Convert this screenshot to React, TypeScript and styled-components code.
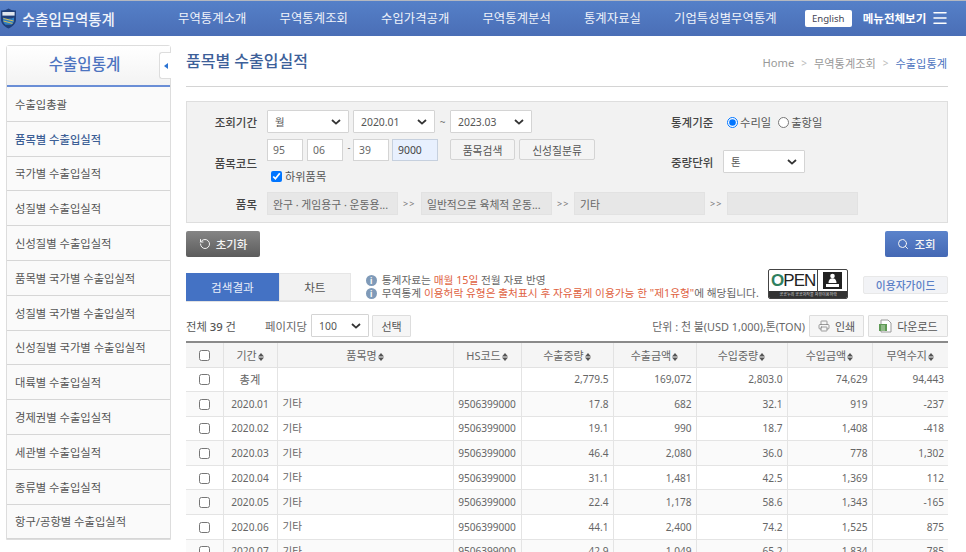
import React from 'react';
import styled, { createGlobalStyle } from 'styled-components';
import { Printer, RotateCw, Search, Menu } from 'lucide-react';

const GlobalStyle = createGlobalStyle`
   html, body {
      margin: 0;
      padding: 0;
      height: 552px;
      overflow: hidden;
      background: #fff;
   }
   * {
      box-sizing: border-box;
   }
   body, input, select, button, table {
      font-family: "Noto Sans", "Noto Sans CJK KR", sans-serif;
      font-size: 11px;
      color: #555;
   }
`;

const chevron = `url("data:image/svg+xml,%3Csvg xmlns='http://www.w3.org/2000/svg' width='10' height='6'%3E%3Cpath d='M1 1l4 3.6L9 1' fill='none' stroke='%23333' stroke-width='1.8'/%3E%3C/svg%3E")`;

const NAV = ['무역통계소개', '무역통계조회', '수입가격공개', '무역통계분석', '통계자료실', '기업특성별무역통계'];
const SIDE = [
   '수출입총괄',
   '품목별 수출입실적',
   '국가별 수출입실적',
   '성질별 수출입실적',
   '신성질별 수출입실적',
   '품목별 국가별 수출입실적',
   '성질별 국가별 수출입실적',
   '신성질별 국가별 수출입실적',
   '대륙별 수출입실적',
   '경제권별 수출입실적',
   '세관별 수출입실적',
   '종류별 수출입실적',
   '항구/공항별 수출입실적',
];
const COLS = [37, 54, 176, 68, 92, 83, 91, 85, 76];
const HEADS = ['기간', '품목명', 'HS코드', '수출중량', '수출금액', '수입중량', '수입금액', '무역수지'];
const ROWS = [
   ['2020.01', '17.8', '682', '32.1', '919', '-237'],
   ['2020.02', '19.1', '990', '18.7', '1,408', '-418'],
   ['2020.03', '46.4', '2,080', '36.0', '778', '1,302'],
   ['2020.04', '31.1', '1,481', '42.5', '1,369', '112'],
   ['2020.05', '22.4', '1,178', '58.6', '1,343', '-165'],
   ['2020.06', '44.1', '2,400', '74.2', '1,525', '875'],
   ['2020.07', '42.9', '1,049', '65.2', '1,834', '785'],
];

const Header = styled.header`
   height: 36px;
   display: flex;
   align-items: center;
   border-top: 1px solid #b4b8c0;
   background: linear-gradient(#5580c8, #4a6eb6);
   color: #fff;
   padding-bottom: 1px;
`;

const Brand = styled.div`
   width: 178px;
   display: flex;
   align-items: center;
   gap: 5px;
   font-size: 14.4px;
   font-weight: 500;
   color: #f2f5fb;
`;

const Nav = styled.nav`
   display: flex;
   gap: 33px;
   font-size: 12.3px;
   letter-spacing: 0.1px;
   color: #f0f3fa;
   white-space: nowrap;
`;

const HeaderRight = styled.div`
   margin-left: 28px;
   display: flex;
   align-items: center;
`;

const EnglishButton = styled.button`
   width: 47px;
   height: 17px;
   padding: 0;
   border: 0;
   border-radius: 2px;
   background: #fff;
   color: #445;
   font-size: 9.6px;
`;

const AllMenu = styled.span`
   margin: 0 5px 0 11px;
   font-size: 11.5px;
   font-weight: 700;
   color: #fff;
`;

const Body = styled.div`
   display: flex;
   padding: 9px 18px 0 6px;
   gap: 15px;
`;

const Sidebar = styled.aside`
   width: 165px;
   flex: none;
   border: 1px solid #ddd;
   border-radius: 3px 3px 0 0;
   background: #fff;
   align-self: flex-start;
`;

const SideTitle = styled.h2`
   position: relative;
   height: 41px;
   margin: 0;
   display: flex;
   align-items: center;
   justify-content: center;
   padding: 0 8px 5px 0;
   border-bottom: 2px solid #6a8ed6;
   background: linear-gradient(#fff, #f3f3f3);
   font-size: 15.6px;
   font-weight: 500;
   color: #4d74c0;
`;

const CollapseTab = styled.span`
   position: absolute;
   top: 6px;
   right: -1px;
   width: 12px;
   height: 27px;
   display: flex;
   align-items: center;
   justify-content: center;
   background: #fff;
   border: 1px solid #ddd;
   border-right: 0;
   border-radius: 3px 0 0 3px;

   &::before {
      content: '';
      border: 3px solid transparent;
      border-right: 4px solid #2b73d2;
      border-left: 0;
   }
`;

const SideItem = styled.div<{ $active?: boolean }>`
   height: 34.8px;
   display: flex;
   align-items: center;
   padding-left: 8px;
   border-bottom: 1px solid #d6d6d6;
   background: #fafafa;
   font-size: 11.3px;
   white-space: nowrap;
   color: ${(p) => (p.$active ? '#3d5f96' : '#555')};
   font-weight: ${(p) => (p.$active ? 500 : 400)};
`;

const Main = styled.main`
   flex: 1;
   min-width: 0;
`;

const TitleRow = styled.div`
   height: 42px;
   display: flex;
   align-items: center;
   justify-content: space-between;
   border-bottom: 1px solid #d4d4d4;
   padding-bottom: 9px;
`;

const PageTitle = styled.h1`
   margin: -2px 0 0;
   font-size: 16px;
   font-weight: 500;
   color: #3d6099;
`;

const Crumbs = styled.div`
   display: flex;
   align-items: center;
   gap: 7px;
   margin-right: 1px;
   padding-top: 3px;
   font-size: 11.2px;
   color: #999;
`;

const CrumbSep = styled.span`
   color: #bbb;
   font-size: 10px;
`;

const CrumbCurrent = styled.span`
   color: #4d74c0;
`;

const SearchPanel = styled.section`
   margin-top: 14px;
   height: 122px;
   background: #f2f2f2;
   border: 1px solid #dedede;
   padding: 8px 0 0;
`;

const PanelTop = styled.div`
   display: flex;
`;

const LeftForm = styled.div`
   width: 484px;
   display: grid;
   grid-template-columns: 70px 1fr;
   column-gap: 10px;
   row-gap: 6px;
   align-items: center;
`;

const RightForm = styled.div`
   display: grid;
   grid-template-columns: 42px auto;
   grid-template-rows: 23px 23px;
   column-gap: 10px;
   row-gap: 17px;
   align-items: center;
`;

const FieldLabel = styled.label`
   font-size: 11.5px;
   font-weight: 500;
   color: #444;
   text-align: right;
   white-space: nowrap;
`;

const Row = styled.div`
   display: flex;
   align-items: center;
`;

const Stack = styled.div`
   display: flex;
   flex-direction: column;
`;

const Select = styled.select<{ $w: number; $ml?: number }>`
   appearance: none;
   width: ${(p) => p.$w}px;
   height: 23px;
   margin-left: ${(p) => p.$ml ?? 0}px;
   padding: 0 0 0 7px;
   border: 1px solid #d4d4d4;
   border-radius: 1px;
   font-size: 10.4px;
   color: #555;
   background: #fff ${chevron} no-repeat right 7px center;
`;

const Tilde = styled.span`
   width: 15px;
   text-align: center;
   font-size: 10px;
   color: #777;
`;

const CodeInput = styled.input<{ $w: number; $filled?: boolean; $mr?: number }>`
   width: ${(p) => p.$w}px;
   height: 22px;
   padding: 0 0 0 5px;
   border: 1px solid ${(p) => (p.$filled ? '#c6d0de' : '#d4d4d4')};
   background: ${(p) => (p.$filled ? '#e8f0fe' : '#fff')};
   font-size: 10.4px;
   color: ${(p) => (p.$filled ? '#444' : '#666')};
   margin-right: ${(p) => p.$mr ?? 4}px;
`;

const Dash = styled.span`
   width: 4px;
   margin-right: 2px;
   margin-top: -6px;
   font-size: 9px;
   text-align: center;
`;

const FormButton = styled.button<{ $w: number; $ml?: number }>`
   width: ${(p) => p.$w}px;
   height: 21px;
   margin-left: ${(p) => p.$ml ?? 0}px;
   margin-top: -1px;
   padding: 0;
   border: 1px solid #d4d4d4;
   border-radius: 2px;
   background: #f4f4f4;
   font-size: 10.8px;
   color: #555;
`;

const CheckLabel = styled.label`
   height: 21px;
   margin-top: 4px;
   display: flex;
   align-items: center;
   gap: 3px;
   font-size: 11.2px;
   color: #555;

   input {
      width: 11px;
      height: 11px;
      margin: 1px 0 0 4px;
   }
`;

const RadioLabel = styled.label`
   display: flex;
   align-items: center;
   gap: 2px;
   margin-right: 3px;
   font-size: 11.3px;
   color: #555;

   input {
      width: 11px;
      height: 11px;
      margin: 1px 0 0 4px;
   }
`;

const ItemRow = styled.div`
   margin-top: 6px;
   display: grid;
   grid-template-columns: 70px 1fr;
   column-gap: 10px;
   align-items: center;
`;

const ItemBox = styled.div`
   width: 131px;
   height: 23px;
   display: flex;
   align-items: center;
   padding-left: 5px;
   background: #e7e7e7;
   border: 1px solid #e2e2e2;
   font-size: 10.8px;
   color: #666;
   white-space: nowrap;
   overflow: hidden;
`;

const Arrow = styled.span<{ $w: number }>`
   width: ${(p) => p.$w}px;
   padding-left: 5px;
   font-size: 9px;
   letter-spacing: 1px;
   color: #777;
`;

const ActionRow = styled.div`
   margin-top: 8px;
   display: flex;
   justify-content: space-between;
`;

const ActionButton = styled.button<{ $primary?: boolean; $w: number }>`
   width: ${(p) => p.$w}px;
   height: 26px;
   display: flex;
   align-items: center;
   justify-content: center;
   gap: 5px;
   padding: 0;
   border: 0;
   border-radius: 2px;
   font-size: 11.5px;
   font-weight: 500;
   color: #f4f4f4;
   background: ${(p) =>
      p.$primary ? 'linear-gradient(#5b83cb, #4468b4)' : 'linear-gradient(#858585, #5c5c5c)'};
`;

const TabRow = styled.div`
   margin-top: 16px;
   height: 29px;
   display: flex;
   align-items: flex-start;
   border-bottom: 1px solid #e2e2e2;
`;

const Tab = styled.div<{ $active?: boolean; $w: number }>`
   width: ${(p) => p.$w}px;
   height: 28px;
   display: flex;
   align-items: center;
   justify-content: center;
   font-size: 11.6px;
   color: ${(p) => (p.$active ? '#e8eefa' : '#555')};
   background: ${(p) => (p.$active ? '#4472c4' : '#f2f2f2')};
   border: ${(p) => (p.$active ? '0' : '1px solid #e6e6e6')};
`;

const Notes = styled.div`
   margin: 1px 0 0 15px;
   width: 403px;
   display: flex;
   flex-direction: column;
   font-size: 10.7px;
   line-height: 13px;
   color: #666;
   white-space: nowrap;
`;

const NoteLine = styled.div`
   display: flex;
   align-items: center;
   gap: 5px;
`;

const Red = styled.span`
   color: #e0623f;
`;

const InfoDot = styled.span`
   width: 11px;
   height: 11px;
   flex: none;
   display: inline-flex;
   align-items: center;
   justify-content: center;
   border-radius: 50%;
   background: #7f9ab8;
   color: #fff;
   font-size: 8px;
   font-weight: 700;
   line-height: 1;
`;

const OpenBadge = styled.div`
   width: 80px;
   height: 30px;
   margin-top: -4px;
   display: flex;
   flex-direction: column;
   border: 1px solid #444;
   border-radius: 2px;
   background: #fff;
   overflow: hidden;
`;

const OpenTop = styled.div`
   flex: 1;
   display: flex;
   align-items: stretch;
   min-height: 0;
`;

const OpenWord = styled.div`
   flex: 1;
   display: flex;
   align-items: center;
   justify-content: center;
   font-family: "Liberation Sans", sans-serif;
   font-size: 17px;
   line-height: 1;
   letter-spacing: -1px;
   color: #222;
   border-right: 1px solid #444;
`;

const OpenO = styled.span`
   color: #2f7f5f;
   font-weight: 700;
`;

const OpenMark = styled.div`
   width: 29px;
   display: flex;
   align-items: center;
   justify-content: center;
`;

const OpenCaption = styled.div`
   height: 7px;
   flex: none;
   background: #333;
   color: #ddd;
   font-size: 4px;
   line-height: 7px;
   text-align: center;
   white-space: nowrap;
   overflow: hidden;
`;

const GuideButton = styled.button`
   width: 85px;
   height: 18px;
   margin: 3px 0 0 15px;
   padding: 0;
   border: 1px solid #e8e8e8;
   border-radius: 2px;
   background: #f2f3f6;
   color: #5b80c6;
   font-size: 10.8px;
   font-weight: 500;
`;

const Toolbar = styled.div`
   margin-top: 12px;
   height: 23px;
   display: flex;
   align-items: center;
`;

const Total = styled.span`
   width: 79px;
   font-size: 11.3px;
   color: #555;
`;

const TotalCount = styled.b`
   font-weight: 500;
`;

const PerPage = styled.span`
   width: 46px;
   font-size: 11.4px;
   color: #666;
   white-space: nowrap;
`;

const SmallButton = styled.button<{ $w: number; $ml: number }>`
   width: ${(p) => p.$w}px;
   height: 22px;
   margin-left: ${(p) => p.$ml}px;
   display: flex;
   align-items: center;
   justify-content: center;
   gap: 5px;
   padding: 0;
   border: 1px solid #ddd;
   border-radius: 1px;
   background: #f6f6f6;
   font-size: 11px;
   color: #555;
`;

const Unit = styled.span`
   margin-left: auto;
   font-size: 10.9px;
   color: #666;
   white-space: nowrap;
`;

const Table = styled.table`
   margin-top: 4px;
   width: 762px;
   table-layout: fixed;
   border-collapse: collapse;
   border-top: 2px solid #8a8a8a;
`;

const Th = styled.th`
   height: 25px;
   padding: 0;
   background: #f5f5f5;
   border: 1px solid #e2e2e2;
   border-top: 0;
   font-size: 11px;
   font-weight: 400;
   color: #666;
   white-space: nowrap;
   &:first-child { border-left: 0; }
   &:last-child { border-right: 0; }
`;

const Tr = styled.tr<{ $shade?: boolean }>`
   height: 24.6px;
   background: ${(p) => (p.$shade ? '#fafafa' : '#fff')};
`;

const Td = styled.td<{ $align?: string; $strong?: boolean }>`
   padding: 0 4px;
   border: 1px solid #e4e4e4;
   text-align: ${(p) => p.$align ?? 'right'};
   font-size: ${(p) => (p.$strong ? '11.3px' : '10.1px')};
   color: #666;
   white-space: nowrap;
   overflow: hidden;
   &:first-child { border-left: 0; }
   &:last-child { border-right: 0; }
`;

const NameCell = styled(Td)`
   padding-left: 5px;
   padding-bottom: 2px;
   font-size: 10.6px;
`;

const TableCheck = styled.input`
   display: block;
   width: 11px;
   height: 11px;
   margin: 1px auto 0;
   accent-color: #555;
`;

const SortSvg = styled.svg`
   margin-left: 1px;
   vertical-align: -1px;
`;

const ResetIcon = styled(RotateCw)`
   transform: scaleX(-1);
`;

const SortMark = () => (
   <SortSvg width="6" height="8" viewBox="0 0 6 8">
      <path d="M3 0l3 3.4H0zM3 8L0 4.6h6z" fill="#555" />
   </SortSvg>
);

const Shield = () => (
   <svg width="17" height="21" viewBox="0 0 17 21">
      <path d="M1 2.4C4 2.6 6.400 2 8.500 .6c2.100 1.400 4.500 2 7.500 1.800v9c0 4-3 6.800-7.500 9C4 18.200 1 15.400 1 11.400z" fill="#1f3f7a" />
      <path d="M2.400 4h12.200v3.600H2.400z" fill="#dfe6ee" />
      <path d="M3 9.500c3 1.600 8 1.600 11 0v2.500c0 2-1 3.600-2.500 4.800H5.500C4 15.600 3 14 3 12z" fill="#2f7fc4" />
      <path d="M3.500 10.500l10 2.500M3.500 13l9 2.400" stroke="#e8c34a" strokeWidth=".9" />
   </svg>
);

const ExcelIcon = () => (
   <svg width="14" height="14" viewBox="0 0 14 14">
      <path d="M3 1h7l3 3v9H3z" fill="#fff" stroke="#9a9a9a" />
      <path d="M1 5h8v7H1z" fill="#5f9a55" />
      <path d="M3 7h4M3 9h4M3 11h4" stroke="#dcecd8" strokeWidth=".8" />
   </svg>
);

const OpenFigure = () => (
   <svg width="19" height="17" viewBox="0 0 19 17">
      <rect width="19" height="17" fill="#222" />
      <circle cx="9.500" cy="4" r="2.300" fill="#fff" />
      <path d="M5.500 11c0-3 1.500-4.700 4-4.700s4 1.700 4 4.700z" fill="#fff" />
      <rect x="3" y="12" width="13" height="3" fill="#fff" />
   </svg>
);

const App = () => {
   return (
      <>
         <GlobalStyle />
         <Header>
            <Brand>
               <Shield />
               수출입무역통계
            </Brand>
            <Nav>
               {NAV.map((n) => (
                  <span key={n}>{n}</span>
               ))}
            </Nav>
            <HeaderRight>
               <EnglishButton>English</EnglishButton>
               <AllMenu>메뉴전체보기</AllMenu>
               <Menu size={18} strokeWidth={2} color="#fff" />
            </HeaderRight>
         </Header>
         <Body>
            <Sidebar>
               <SideTitle>
                  수출입통계
                  <CollapseTab />
               </SideTitle>
               {SIDE.map((s, i) => (
                  <SideItem key={s} $active={i === 1}>
                     {s}
                  </SideItem>
               ))}
            </Sidebar>
            <Main>
               <TitleRow>
                  <PageTitle>품목별 수출입실적</PageTitle>
                  <Crumbs>
                     <span>Home</span>
                     <CrumbSep>&gt;</CrumbSep>
                     <span>무역통계조회</span>
                     <CrumbSep>&gt;</CrumbSep>
                     <CrumbCurrent>수출입통계</CrumbCurrent>
                  </Crumbs>
               </TitleRow>

               <SearchPanel>
                  <PanelTop>
                     <LeftForm>
                        <FieldLabel>조회기간</FieldLabel>
                        <Row>
                           <Select $w={82} defaultValue="월">
                              <option>월</option>
                           </Select>
                           <Select $w={82} $ml={4} defaultValue="2020.01">
                              <option>2020.01</option>
                           </Select>
                           <Tilde>~</Tilde>
                           <Select $w={82} defaultValue="2023.03">
                              <option>2023.03</option>
                           </Select>
                        </Row>
                        <FieldLabel>품목코드</FieldLabel>
                        <Stack>
                           <Row>
                              <CodeInput $w={36} defaultValue="95" />
                              <CodeInput $w={36} defaultValue="06" />
                              <Dash>-</Dash>
                              <CodeInput $w={36} $mr={3} defaultValue="39" />
                              <CodeInput $w={46} $filled defaultValue="9000" />
                              <FormButton $w={65} $ml={8}>품목검색</FormButton>
                              <FormButton $w={76} $ml={4}>신성질분류</FormButton>
                           </Row>
                           <CheckLabel>
                              <input type="checkbox" defaultChecked />
                              하위품목
                           </CheckLabel>
                        </Stack>
                     </LeftForm>
                     <RightForm>
                        <FieldLabel>통계기준</FieldLabel>
                        <Row>
                           <RadioLabel>
                              <input type="radio" name="basis" defaultChecked />
                              수리일
                           </RadioLabel>
                           <RadioLabel>
                              <input type="radio" name="basis" />
                              출항일
                           </RadioLabel>
                        </Row>
                        <FieldLabel>중량단위</FieldLabel>
                        <Select $w={82} defaultValue="톤">
                           <option>톤</option>
                        </Select>
                     </RightForm>
                  </PanelTop>
                  <ItemRow>
                     <FieldLabel>품목</FieldLabel>
                     <Row>
                        <ItemBox>완구 · 게임용구 · 운동용...</ItemBox>
                        <Arrow $w={23}>&gt;&gt;</Arrow>
                        <ItemBox>일반적으로 육체적 운동...</ItemBox>
                        <Arrow $w={22}>&gt;&gt;</Arrow>
                        <ItemBox>기타</ItemBox>
                        <Arrow $w={22}>&gt;&gt;</Arrow>
                        <ItemBox />
                     </Row>
                  </ItemRow>
               </SearchPanel>

               <ActionRow>
                  <ActionButton $w={74}>
                     <ResetIcon size={12} strokeWidth={2} />
                     초기화
                  </ActionButton>
                  <ActionButton $w={63} $primary>
                     <Search size={12} strokeWidth={2} />
                     조회
                  </ActionButton>
               </ActionRow>

               <TabRow>
                  <Tab $w={93} $active>검색결과</Tab>
                  <Tab $w={72}>차트</Tab>
                  <Notes>
                     <NoteLine>
                        <InfoDot>i</InfoDot>
                        <span>
                           통계자료는 <Red>매월 15일</Red> 전월 자료 반영
                        </span>
                     </NoteLine>
                     <NoteLine>
                        <InfoDot>i</InfoDot>
                        <span>
                           무역통계 <Red>이용허락 유형은 출처표시 후 자유롭게 이용가능 한 "제1유형"</Red>에 해당됩니다.
                        </span>
                     </NoteLine>
                  </Notes>
                  <OpenBadge>
                     <OpenTop>
                        <OpenWord>
                           <OpenO>O</OpenO>PEN
                        </OpenWord>
                        <OpenMark>
                           <OpenFigure />
                        </OpenMark>
                     </OpenTop>
                     <OpenCaption>공공누리 공공저작물 자유이용허락</OpenCaption>
                  </OpenBadge>
                  <GuideButton>이용자가이드</GuideButton>
               </TabRow>

               <Toolbar>
                  <Total>
                     전체 <TotalCount>39</TotalCount> 건
                  </Total>
                  <PerPage>페이지당</PerPage>
                  <Select $w={58} defaultValue="100">
                     <option>100</option>
                  </Select>
                  <SmallButton $w={39} $ml={3}>선택</SmallButton>
                  <Unit>단위 : 천 불(USD 1,000),톤(TON)</Unit>
                  <SmallButton $w={55} $ml={4}>
                     <Printer size={12} strokeWidth={1.4} color="#777" />
                     인쇄
                  </SmallButton>
                  <SmallButton $w={80} $ml={4}>
                     <ExcelIcon />
                     다운로드
                  </SmallButton>
               </Toolbar>

               <Table>
                  <colgroup>
                     {COLS.map((w, i) => (
                        <col key={i} width={w} />
                     ))}
                  </colgroup>
                  <thead>
                     <tr>
                        <Th>
                           <TableCheck type="checkbox" />
                        </Th>
                        {HEADS.map((h) => (
                           <Th key={h}>
                              {h}
                              <SortMark />
                           </Th>
                        ))}
                     </tr>
                  </thead>
                  <tbody>
                     <Tr>
                        <Td $align="center">
                           <TableCheck type="checkbox" />
                        </Td>
                        <Td $align="center" $strong>총계</Td>
                        <Td />
                        <Td />
                        <Td>2,779.5</Td>
                        <Td>169,072</Td>
                        <Td>2,803.0</Td>
                        <Td>74,629</Td>
                        <Td>94,443</Td>
                     </Tr>
                     {ROWS.map((r, i) => (
                        <Tr key={r[0]} $shade={i % 2 === 0}>
                           <Td $align="center">
                              <TableCheck type="checkbox" />
                           </Td>
                           <Td $align="center">{r[0]}</Td>
                           <NameCell $align="left">기타</NameCell>
                           <Td $align="center">9506399000</Td>
                           {r.slice(1).map((v, j) => (
                              <Td key={j}>{v}</Td>
                           ))}
                        </Tr>
                     ))}
                  </tbody>
               </Table>
            </Main>
         </Body>
      </>
   );
};

export default App;
